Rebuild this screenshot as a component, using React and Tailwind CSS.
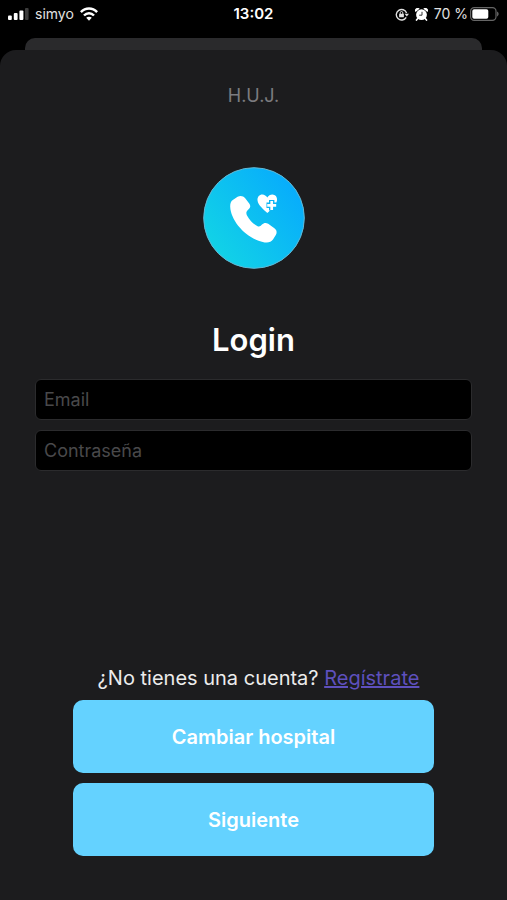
import React from "react";

function SignalIcon() {
  return (
    <svg width="21" height="12" viewBox="0 0 21 12" aria-hidden="true">
      <rect x="0" y="7.5" width="3.8" height="4.5" rx="1" fill="#fff" />
      <rect x="5.8" y="5" width="3.8" height="7" rx="1" fill="#fff" />
      <rect x="11.4" y="2.5" width="4" height="9.5" rx="1" fill="#fff" />
      <rect x="17" y="0" width="3.6" height="12" rx="1" fill="#3c3c3c" />
    </svg>
  );
}

function WifiIcon() {
  return (
    <svg width="18" height="14" viewBox="0 0 18 14" fill="none" stroke="#fff" strokeWidth="2.5" aria-hidden="true">
      <path d="M0.9 5.2C5.5 .3 12.5 .3 17.1 5.2" />
      <path d="M4 8.5C6.9 5.5 11.1 5.5 14 8.5" />
      <path d="M9 13.7 6.2 10.8C7.8 9.3 10.2 9.3 11.8 10.8Z" fill="#fff" stroke="none" />
    </svg>
  );
}

function RotationLockIcon() {
  return (
    <svg width="14" height="13" viewBox="0 0 14 13" fill="none" stroke="#e0e0e0" strokeWidth="1.4" aria-hidden="true">
      <path d="M11.2 9.4A5.3 5.3 0 1 1 11.6 5" />
      <path d="M9.6 5.7H14L11.8 8.5Z" fill="#e0e0e0" stroke="none" />
      <rect x="4.1" y="5.7" width="4.8" height="3.6" rx=".5" fill="#e0e0e0" stroke="none" />
      <path d="M5.2 6V4.8a1.3 1.3 0 0 1 2.6 0V6" strokeWidth="1" />
    </svg>
  );
}

function AlarmIcon() {
  return (
    <svg width="13" height="13" viewBox="0 0 13 13" aria-hidden="true">
      <path d="M.6 4A2.3 2.3 0 0 1 4.6.8ZM12.4 4A2.3 2.3 0 0 0 8.4.8Z" fill="#fff" />
      <path d="m2.8 10.4-1.3 1.7M10.2 10.4l1.3 1.7" stroke="#fff" strokeWidth="1.6" strokeLinecap="round" />
      <circle cx="6.5" cy="6.7" r="5.4" fill="#fff" />
      <path d="M7 3.8V7.2H4.2" fill="none" stroke="#333" strokeWidth="1" />
    </svg>
  );
}

function BatteryIcon() {
  return (
    <svg width="29" height="14" viewBox="0 0 29 14" aria-hidden="true">
      <rect x=".6" y=".6" width="25.4" height="12.8" rx="3.6" fill="none" stroke="#666" strokeWidth="1.2" />
      <rect x="2.3" y="2.3" width="16" height="9.4" rx="1.8" fill="#fff" />
      <path d="M27.2 4.6c1.8 .7 1.8 4.1 0 4.8Z" fill="#777" />
    </svg>
  );
}

function Logo() {
  return (
    <svg width="102" height="102" viewBox="0 0 102 102" role="img" aria-label="H.U.J.">
      <defs>
        <linearGradient id="disc" x1="0.1" y1="0.85" x2="0.9" y2="0.25">
          <stop offset="0" stopColor="#12d3e6" />
          <stop offset="1" stopColor="#08aefb" />
        </linearGradient>
      </defs>
      <circle cx="51" cy="51" r="50.3" fill="url(#disc)" stroke="#62b9d6" strokeWidth="1" />
      <path
        d="M29.8 33 34.6 29.8C37.2 28.3 40.2 28.8 42.2 31.2L46.4 36.8C47.8 38.8 47.4 40.6 45.6 42.2 43.2 44.2 42.8 46 44 48.4 46.6 53.2 50 56.6 54.2 59 56 60 57.4 59.6 59 57.6 60.8 55.6 63 55.4 65.2 56.8L71.4 61.2C73.8 63 74.2 65.4 72.8 68L70 72.6C68.2 75.2 65.2 76 61.6 75.4 44.6 72.6 27.8 55 27.2 39.8 27.1 36.6 27.8 34.4 29.8 33Z"
        fill="#fff"
      />
      <path
        d="M64.3 46.1C61.2 42.9 54.9 38.4 54.5 33.3 54.2 29.8 56.6 27.4 59.4 27.5 61.5 27.6 63.1 28.8 64.3 30.6 65.5 28.7 67.2 27.5 69.4 27.5 72.2 27.6 74.4 29.8 74 33.2 73.3 38.4 67.4 42.9 64.3 46.1Z"
        fill="#fff"
      />
      <path d="M68.7 33V43.4M63.5 38.2H73.9" stroke="#0cb5f4" strokeWidth="5.4" strokeLinejoin="round" />
      <path d="M68.7 33.9V42.9M64.2 38.4H73.2" stroke="#fff" strokeWidth="2.7" />
    </svg>
  );
}

function StatusBar() {
  return (
    <header className="grid h-7 grid-cols-[1fr_auto_1fr] items-center px-2 text-sm leading-5 text-[#e2e2e2]">
      <div className="flex items-center gap-1.5">
        <SignalIcon />
        <span>simyo</span>
        <WifiIcon />
      </div>
      <time className="text-[15px] font-semibold text-white">13:02</time>
      <div className="flex items-center justify-end gap-0.5">
        <div className="flex items-center gap-1.5">
          <RotationLockIcon />
          <AlarmIcon />
          <span className="whitespace-nowrap">70 %</span>
        </div>
        <BatteryIcon />
      </div>
    </header>
  );
}

function Field({ label, type }) {
  return (
    <input
      type={type}
      aria-label={label}
      placeholder={label}
      className="block h-[41px] w-full rounded-md border border-[#2b2b2d] bg-black px-2 text-lg text-white outline-none placeholder:text-[#49494b]"
    />
  );
}

function ActionButton({ children, type = "button" }) {
  return (
    <button
      type={type}
      className="h-[73px] w-full rounded-[10px] bg-[#64d2ff] text-xl font-semibold text-white"
    >
      {children}
    </button>
  );
}

export default function App() {
  return (
    <div className="flex min-h-screen flex-col bg-black font-['Inter','Liberation_Sans',sans-serif]">
      <StatusBar />
      <div className="mx-[25px] mt-2.5 h-3 rounded-t-[10px] bg-[#2a2a2c]" />
      <main className="flex flex-1 flex-col items-center rounded-t-[16px] bg-[#1c1c1e] px-[35px] pb-11 pt-8">
        <p className="text-lg leading-7 text-[#7c7c80]">H.U.J.</p>
        <div className="mt-[57px]">
          <Logo />
        </div>
        <h1 className="mt-[51px] text-[31px] font-semibold leading-10 text-white">Login</h1>
        <form className="flex w-full flex-1 flex-col items-center pt-[19px]" onSubmit={(e) => e.preventDefault()}>
          <div className="flex w-full flex-col gap-2.5">
            <Field label="Email" type="email" />
            <Field label="Contraseña" type="password" />
          </div>
          <p className="mt-auto pl-2.5 text-xl leading-7 text-[#ececec]">
            ¿No tienes una cuenta?{" "}
            <a href="#registro" className="text-[#5e50bd] underline">Regístrate</a>
          </p>
          <div className="mt-2 flex w-full flex-col gap-2.5 px-[38px]">
            <ActionButton>Cambiar hospital</ActionButton>
            <ActionButton type="submit">Siguiente</ActionButton>
          </div>
        </form>
      </main>
    </div>
  );
}
